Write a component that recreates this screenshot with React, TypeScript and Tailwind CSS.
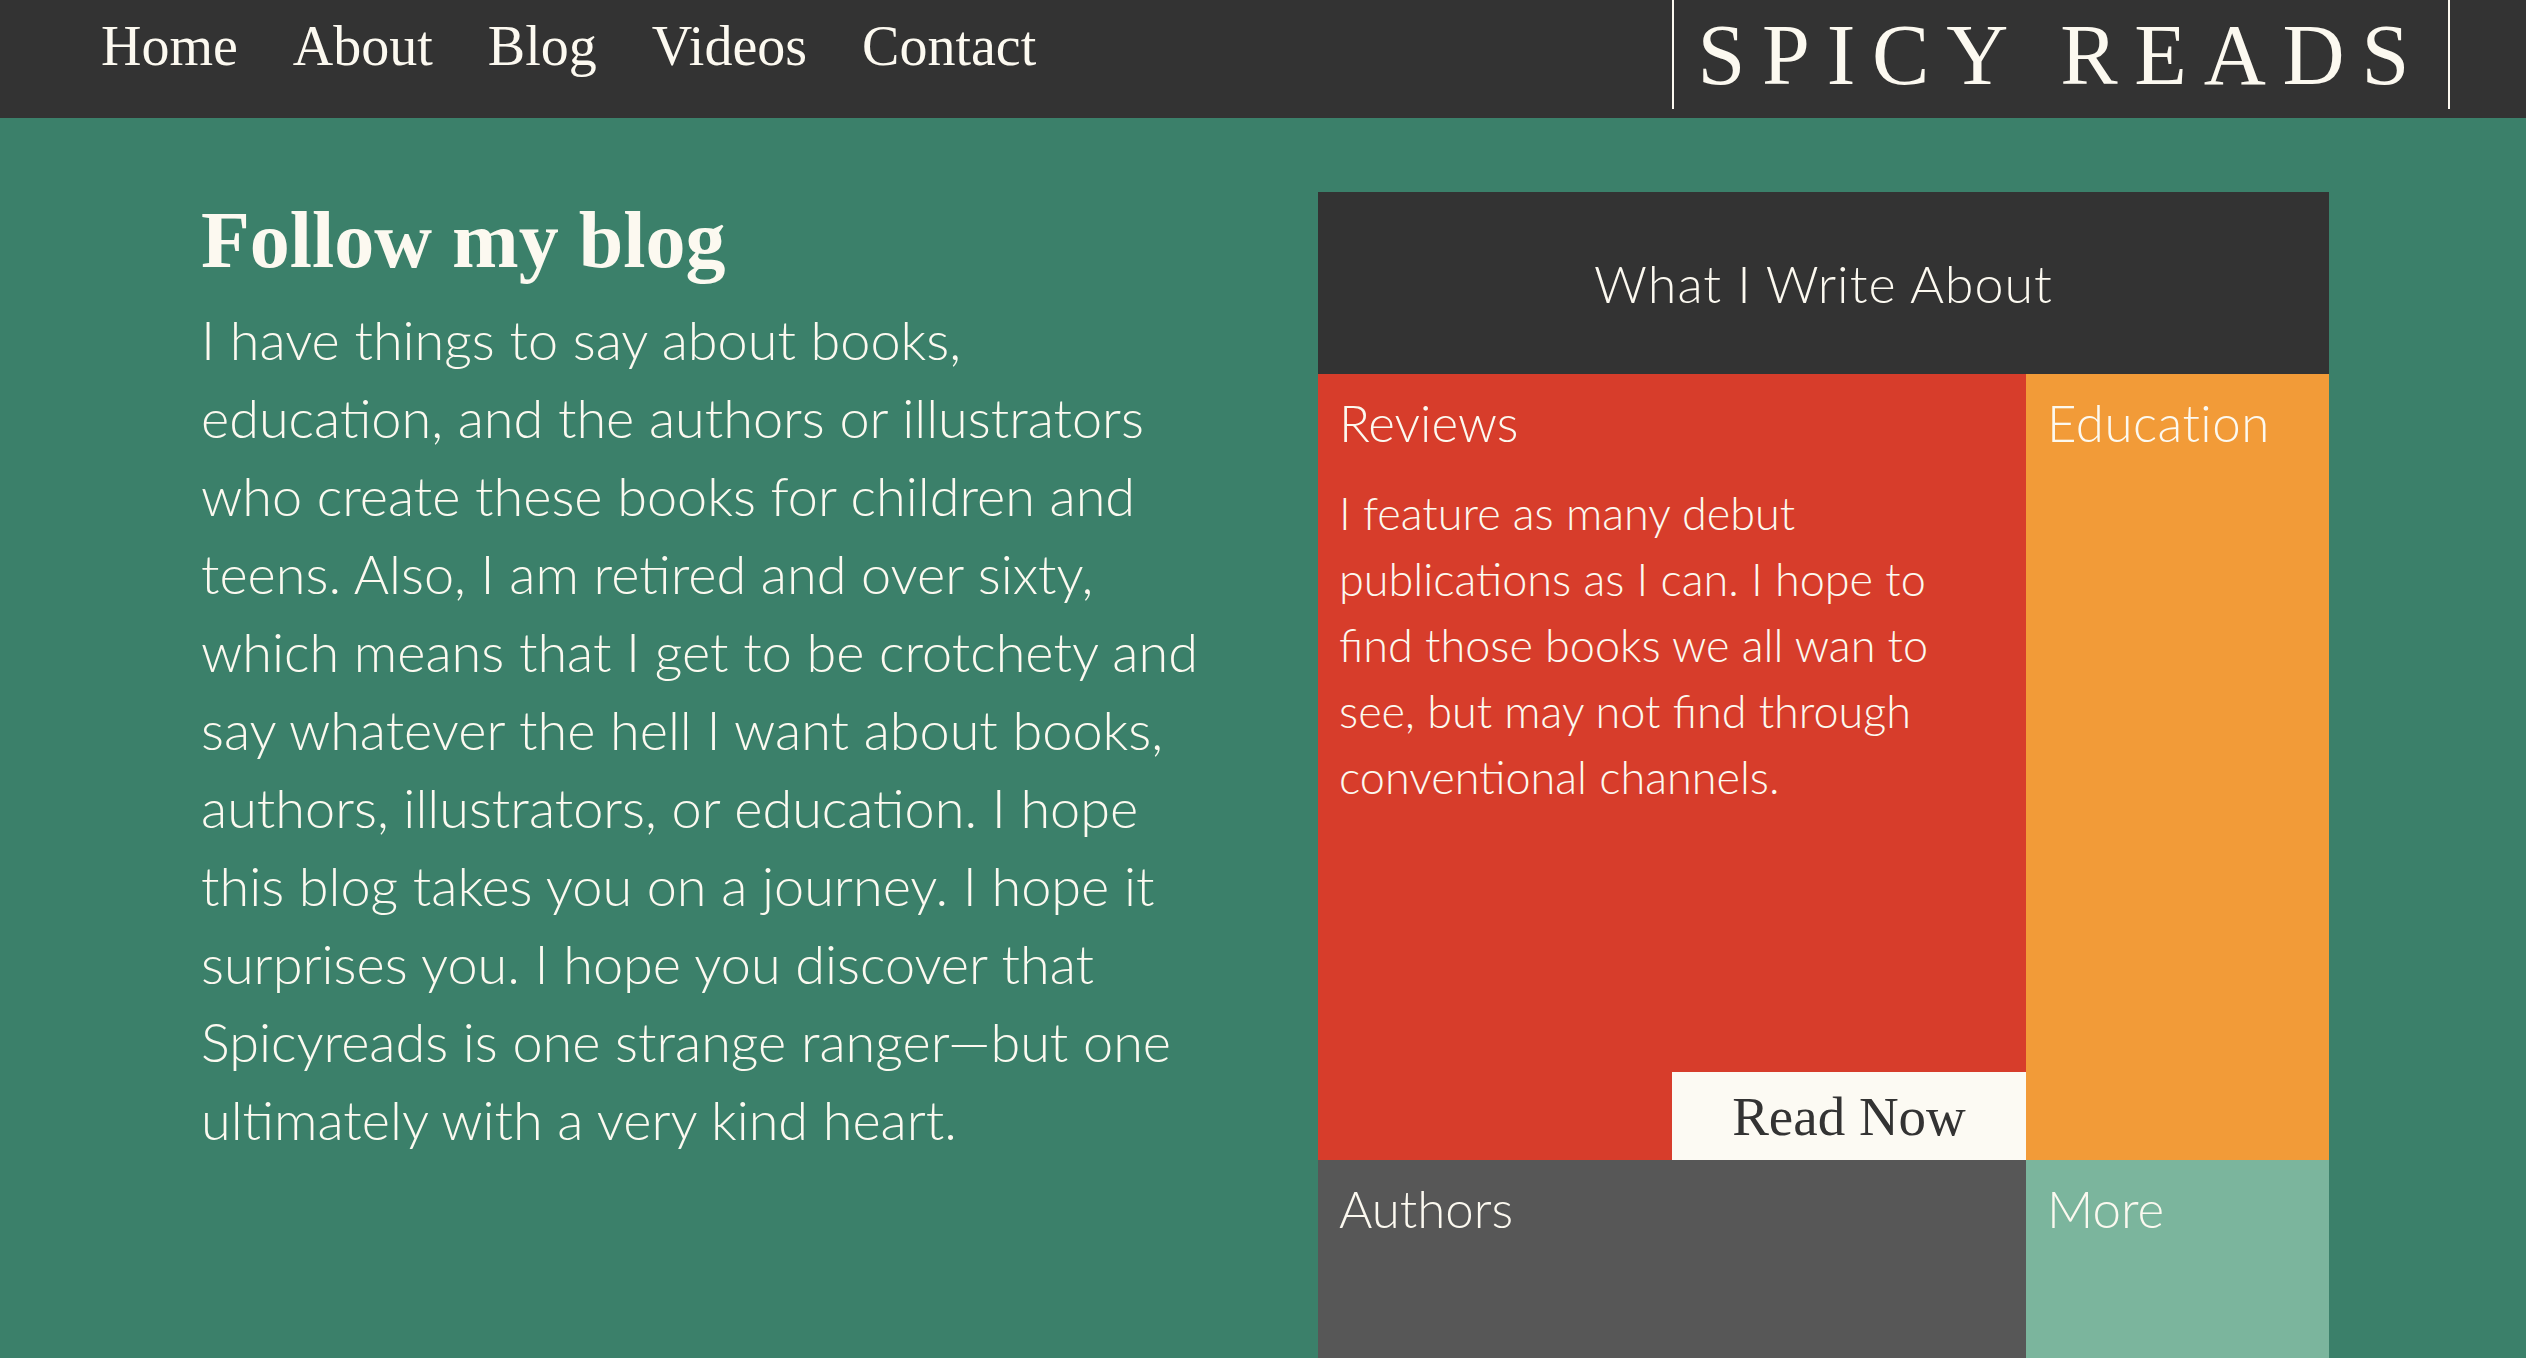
import React from "react";

const serif = { fontFamily: '"Liberation Serif", "DejaVu Serif", serif' };
const sans = { fontFamily: 'Lato, "Open Sans", sans-serif' };

export default function App() {
  const navItems = ["Home", "About", "Blog", "Videos", "Contact"];
  return (
    <div className="min-h-[1358px] w-full bg-[#3b806a] overflow-hidden">
      <header className="h-[118px] bg-[#333333] flex items-start justify-between pl-[101px] pr-[76px]">
        <nav className="flex gap-[55px] pt-[18px] text-[56px] leading-none text-[#fcf9f0]" style={serif}>
          {navItems.map((n) => (
            <a key={n} href="#" className="block">
              {n}
            </a>
          ))}
        </nav>
        <div className="h-[109px] border-l-2 border-r-2 border-[#fcf9f0] pl-[24px] pr-[22px] pt-[12px]">
          <span className="block text-[86px] leading-none tracking-[0.195em] text-[#fcf9f0]" style={serif}>
            SPICY READS
          </span>
        </div>
      </header>

      <main className="flex items-start pl-[201px] pt-[74px]">
        <section className="w-[1117px] shrink-0">
          <h1 className="mt-[8px] text-[80px] leading-none font-bold text-[#fcf9f0]" style={serif}>
            Follow my blog
          </h1>
          <p className="mt-[21px] text-[54px] leading-[78px] font-light text-[#fcf9f0] whitespace-nowrap" style={sans}>
            I have things to say about books,<br />
            education, and the authors or illustrators<br />
            who create these books for children and<br />
            teens. Also, I am retired and over sixty,<br />
            which means that I get to be crotchety and<br />
            say whatever the hell I want about books,<br />
            authors, illustrators, or education. I hope<br />
            this blog takes you on a journey. I hope it<br />
            surprises you. I hope you discover that<br />
            Spicyreads is one strange ranger—but one<br />
            ultimately with a very kind heart.
          </p>
        </section>

        <section className="w-[1011px] shrink-0" style={sans}>
          <div className="h-[182px] bg-[#333333] flex items-center justify-center">
            <h2 className="text-[52px] leading-none font-light tracking-[1px] text-[#fcf9f0]">What I Write About</h2>
          </div>
          <div className="grid grid-cols-[708px_303px]">
            <div className="h-[786px] bg-[#d73d2b] flex flex-col pt-[18px]">
              <h3 className="pl-[21px] text-[51px] leading-[1.2] font-light text-[#fcf9f0]">Reviews</h3>
              <p className="mt-[27px] pl-[21px] pr-[20px] text-[45px] leading-[66px] font-light text-[#fcf9f0] whitespace-nowrap">
                I feature as many debut<br />
                publications as I can. I hope to<br />
                find those books we all wan to<br />
                see, but may not find through<br />
                conventional channels.
              </p>
              <a
                href="#"
                className="mt-auto self-end w-[354px] h-[88px] bg-[#fcfaf3] flex items-center justify-center text-[55px] leading-none text-[#333333]"
                style={serif}
              >
                Read Now
              </a>
            </div>
            <div className="h-[786px] bg-[#f29b38] pt-[18px] pl-[21px]">
              <h3 className="text-[51px] leading-[1.2] font-light tracking-[0.5px] text-[#fcf9f0]">Education</h3>
            </div>
            <div className="h-[260px] bg-[#575757] pt-[18px] pl-[21px]">
              <h3 className="text-[51px] leading-[1.2] font-light text-[#fcf9f0]">Authors</h3>
            </div>
            <div className="h-[260px] bg-[#7bb59d] pt-[18px] pl-[21px]">
              <h3 className="text-[51px] leading-[1.2] font-light text-[#fcf9f0]">More</h3>
            </div>
          </div>
        </section>
      </main>
    </div>
  );
}
